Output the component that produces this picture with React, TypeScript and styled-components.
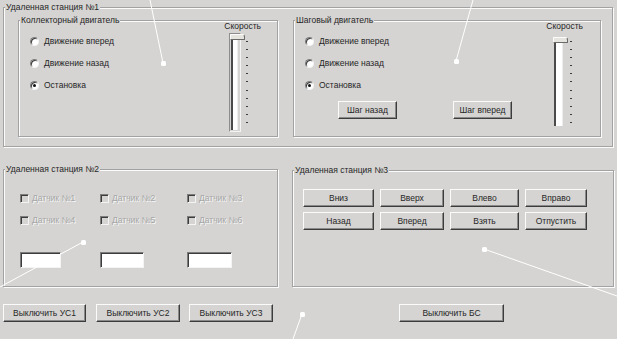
import React from 'react';
import styled, { createGlobalStyle } from 'styled-components';

const GlobalStyle = createGlobalStyle`
  html, body {
    margin: 0;
    padding: 0;
    background: #d5d4d2;
  }
`;

const Page = styled.div`
  position: relative;
  width: 617px;
  height: 339px;
  box-sizing: border-box;
  padding: 7px 0 0 3px;
  background: #d5d4d2;
  overflow: hidden;
  font-family: "Liberation Sans", Arial, sans-serif;
  font-size: 8.5px;
  color: #262626;
`;

const GroupBox = styled.div<{ $w: number; $h: number }>`
  position: relative;
  box-sizing: border-box;
  width: ${(p) => p.$w}px;
  height: ${(p) => p.$h}px;
  flex-shrink: 0;
  border: 1px solid #a2a2a2;
  box-shadow: 1px 1px 0 #fbfbfb, inset 1px 1px 0 #fbfbfb;
`;

const Caption = styled.span`
  position: absolute;
  top: -7px;
  left: 1px;
  padding: 0 1px;
  background: #d5d4d2;
  line-height: 12px;
  white-space: nowrap;
`;

const Station1 = styled(GroupBox)`
  display: flex;
  padding: 12px 0 0 14px;
  gap: 15px;
`;

const Motor = styled(GroupBox)<{ $padLeft: number; $padRight: number }>`
  display: flex;
  padding: 0 ${(p) => p.$padRight}px 0 ${(p) => p.$padLeft}px;
`;

const LeftCol = styled.div`
  display: flex;
  flex-direction: column;
  padding-top: 9px;
`;

const RadioRow = styled.label`
  display: flex;
  align-items: center;
  gap: 5px;
  height: 22px;
  white-space: nowrap;
`;

const RadioDot = styled.span<{ $on?: boolean }>`
  position: relative;
  box-sizing: border-box;
  width: 9px;
  height: 9px;
  border-radius: 50%;
  background: #fff;
  border: 1px solid;
  border-color: #7c7c7c #f4f4f4 #f4f4f4 #7c7c7c;
  box-shadow: inset 1px 1px 0 #3c3c3c;
  &::after {
    content: '';
    display: ${(p) => (p.$on ? 'block' : 'none')};
    position: absolute;
    left: 2px;
    top: 2px;
    width: 3px;
    height: 3px;
    border-radius: 50%;
    background: #111;
  }
`;

const StepRow = styled.div`
  display: flex;
  gap: 56px;
  margin: 5px 0 0 33px;
`;

const Button = styled.button<{ $w: number }>`
  box-sizing: border-box;
  width: ${(p) => p.$w}px;
  height: 18px;
  padding: 0;
  flex-shrink: 0;
  font-family: "Liberation Sans", Arial, sans-serif;
  font-size: 8.5px;
  color: #262626;
  background: #d5d4d2;
  border: 1px solid;
  border-color: #fbfbfb #3c3c3c #3c3c3c #fbfbfb;
  box-shadow: inset -1px -1px 0 #8a8a8a;
  white-space: nowrap;
`;

const SliderBox = styled.div`
  display: flex;
  flex-direction: column;
  margin-left: auto;
`;

const SliderLabel = styled.span`
  line-height: 11px;
  white-space: nowrap;
`;

const SliderBody = styled.div<{ $ml: number; $mt: number }>`
  display: flex;
  align-items: flex-start;
  margin: ${(p) => p.$mt}px 0 0 ${(p) => p.$ml}px;
`;

const Frame = styled.div`
  box-sizing: border-box;
  width: 12px;
  height: 99px;
  padding: 3px 0 0 1px;
  border: 1px solid;
  border-color: #8d8d8d #f4f4f4 #f4f4f4 #8d8d8d;
`;

const Channel = styled.div<{ $w: number; $h: number; $mt: number }>`
  position: relative;
  box-sizing: border-box;
  width: ${(p) => p.$w}px;
  height: ${(p) => p.$h}px;
  margin-top: ${(p) => p.$mt}px;
  background: #fff;
  border-left: 2px solid #4a4a4a;
  border-top: 1px solid #7a7a7a;
  border-right: 1px solid #ececec;
`;

const Thumb = styled.div`
  position: absolute;
  top: -4px;
  left: -3px;
  width: 13px;
  height: 4px;
  background: #e6e4de;
  border: 1px solid;
  border-color: #fbfbfb #6a6a6a #6a6a6a #fbfbfb;
  border-radius: 1px 3px 1px 1px;
`;

const Ticks = styled.div<{ $ml: number; $mt: number }>`
  display: flex;
  flex-direction: column;
  justify-content: space-between;
  height: 82px;
  margin: ${(p) => p.$mt}px 0 0 ${(p) => p.$ml}px;
`;

const Tick = styled.span`
  width: 2px;
  height: 1px;
  background: #3c3c3c;
`;

const Row = styled.div`
  display: flex;
  align-items: flex-start;
  gap: 14px;
  margin-top: 22px;
`;

const Station2 = styled(GroupBox)`
  display: grid;
  grid-template-columns: 80px 87px 80px;
  grid-auto-rows: 12px;
  row-gap: 10px;
  align-content: start;
  padding: 22px 0 0 16px;
`;

const CheckCell = styled.label`
  display: flex;
  align-items: center;
  gap: 3px;
  color: #a6a6a6;
  text-shadow: 1px 1px 0 #f7f7f7;
  white-space: nowrap;
`;

const CheckBox = styled.span`
  box-sizing: border-box;
  width: 9px;
  height: 9px;
  background: #d5d4d2;
  border: 1px solid;
  border-color: #7c7c7c #f4f4f4 #f4f4f4 #7c7c7c;
  box-shadow: inset 1px 1px 0 #3c3c3c;
`;

const TextField = styled.input<{ $w: number }>`
  box-sizing: border-box;
  width: ${(p) => p.$w}px;
  height: 16px;
  margin-top: 16px;
  padding: 0;
  background: #fff;
  border: 1px solid;
  border-color: #7c7c7c #f4f4f4 #f4f4f4 #7c7c7c;
  box-shadow: inset 1px 1px 0 #3c3c3c;
  outline: none;
`;

const Station3 = styled(GroupBox)`
  display: grid;
  grid-template-columns: 71px 64px 69px 62px;
  grid-auto-rows: 18px;
  column-gap: 6px;
  row-gap: 5px;
  align-content: start;
  margin-top: 1px;
  padding: 18px 0 0 10px;
`;

const BottomRow = styled.div`
  display: flex;
  margin-top: 17px;
`;

const Spaced = styled.div<{ $ml: number }>`
  margin-left: ${(p) => p.$ml}px;
`;

const Overlay = styled.svg`
  position: absolute;
  left: 0;
  top: 0;
  pointer-events: none;
`;

const radios = ['Движение вперед', 'Движение назад', 'Остановка'];

function Radios() {
  return (
    <>
      {radios.map((r, i) => (
        <RadioRow key={r}>
          <RadioDot $on={i === 2} />
          {r}
        </RadioRow>
      ))}
    </>
  );
}

function TickColumn({ ml, mt }: { ml: number; mt: number }) {
  return (
    <Ticks $ml={ml} $mt={mt}>
      {Array.from({ length: 11 }).map((_, i) => (
        <Tick key={i} />
      ))}
    </Ticks>
  );
}

const annotations = [
  { x1: 150, y1: 0, x2: 163, y2: 63 },
  { x1: 473, y1: 0, x2: 456, y2: 61 },
  { x1: 0, y1: 287, x2: 83, y2: 242 },
  { x1: 293, y1: 339, x2: 302, y2: 314 },
  { x1: 617, y1: 296, x2: 484, y2: 249 },
];

const sensors = [1, 2, 3, 4, 5, 6];
const station3Buttons = ['Вниз', 'Вверх', 'Влево', 'Вправо', 'Назад', 'Вперед', 'Взять', 'Отпустить'];
const widths3 = [71, 64, 69, 62];

export default function App() {
  return (
    <Page>
      <GlobalStyle />
      <Station1 $w={610} $h={140}>
        <Caption>Удаленная станция №1</Caption>
        <Motor $w={260} $h={117} $padLeft={11} $padRight={16}>
          <Caption>Коллекторный двигатель</Caption>
          <LeftCol>
            <Radios />
          </LeftCol>
          <SliderBox>
            <SliderLabel>Скорость</SliderLabel>
            <SliderBody $ml={5} $mt={1}>
              <Frame>
                <Channel $w={7} $h={93} $mt={0}>
                  <Thumb />
                </Channel>
              </Frame>
              <TickColumn ml={5} mt={8} />
            </SliderBody>
          </SliderBox>
        </Motor>
        <Motor $w={308} $h={117} $padLeft={11} $padRight={17}>
          <Caption>Шаговый двигатель</Caption>
          <LeftCol>
            <Radios />
            <StepRow>
              <Button $w={59}>Шаг назад</Button>
              <Button $w={59}>Шаг вперед</Button>
            </StepRow>
          </LeftCol>
          <SliderBox>
            <SliderLabel>Скорость</SliderLabel>
            <SliderBody $ml={8} $mt={0}>
              <Channel $w={9} $h={86} $mt={8}>
                <Thumb />
              </Channel>
              <TickColumn ml={7} mt={9} />
            </SliderBody>
          </SliderBox>
        </Motor>
      </Station1>

      <Row>
        <Station2 $w={275} $h={118}>
          <Caption>Удаленная станция №2</Caption>
          {sensors.map((n) => (
            <CheckCell key={n}>
              <CheckBox />
              Датчик №{n}
            </CheckCell>
          ))}
          <TextField $w={41} readOnly />
          <TextField $w={44} readOnly />
          <TextField $w={45} readOnly />
        </Station2>
        <Station3 $w={322} $h={117}>
          <Caption>Удаленная станция №3</Caption>
          {station3Buttons.map((b, i) => (
            <Button key={b} $w={widths3[i % 4]}>
              {b}
            </Button>
          ))}
        </Station3>
      </Row>

      <BottomRow>
        <Button $w={83}>Выключить УС1</Button>
        <Spaced $ml={10}>
          <Button $w={84}>Выключить УС2</Button>
        </Spaced>
        <Spaced $ml={9}>
          <Button $w={84}>Выключить УС3</Button>
        </Spaced>
        <Spaced $ml={126}>
          <Button $w={105}>Выключить БС</Button>
        </Spaced>
      </BottomRow>

      <Overlay width={617} height={339} viewBox="0 0 617 339">
        {annotations.map((a, i) => (
          <g key={i}>
            <line x1={a.x1} y1={a.y1} x2={a.x2} y2={a.y2} stroke="#fff" strokeWidth={1} />
            <rect x={a.x2 - 2} y={a.y2 - 2} width={5} height={5} rx={1.5} fill="#fff" />
          </g>
        ))}
      </Overlay>
    </Page>
  );
}
